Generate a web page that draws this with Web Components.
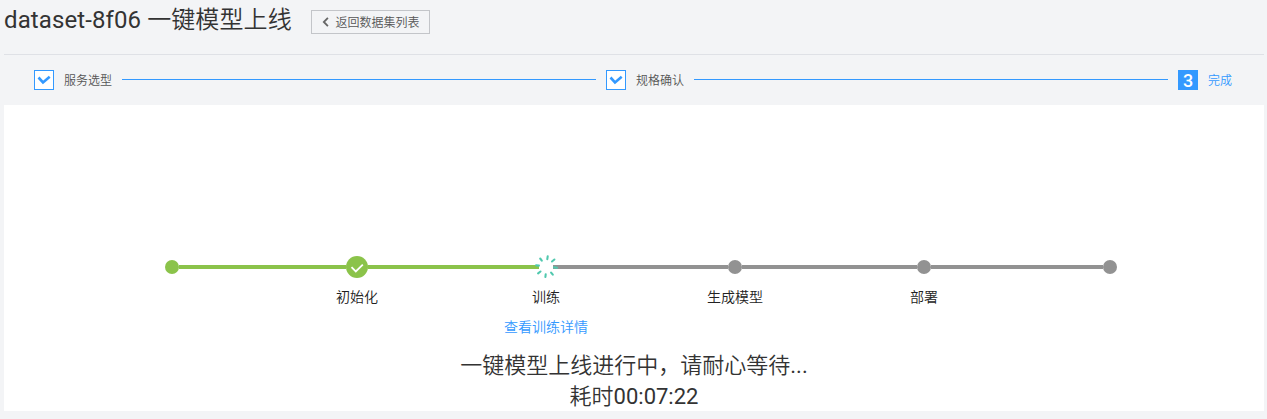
<!DOCTYPE html>
<html lang="zh-CN">
<head>
<meta charset="utf-8">
<title>一键模型上线</title>
<style>
body{margin:0;height:419px;overflow:hidden;background:#f3f4f6;color:#333;font-family:Roboto,"Noto Sans CJK SC",sans-serif}
</style>
</head>
<body>
<deploy-page></deploy-page>
<script>
const define = (name, html) => customElements.define(name, class extends HTMLElement {
  constructor() {
    super();
    const t = document.createElement('template');
    t.innerHTML = html;
    this.attachShadow({mode: 'open'}).append(t.content.cloneNode(true));
  }
});

define('back-button', `<style>
:host{display:flex;box-sizing:border-box;width:119px;height:24px;border:1px solid #c3c5c9;align-items:center;padding-left:10px;font-size:12px;font-weight:350;line-height:20px;color:#555;white-space:nowrap}
svg{width:7px;height:10px;margin-right:6.5px;flex:none}
.t{padding-top:2px}
</style><svg viewBox="0 0 7 10"><path d="M5.9 .8 1.8 5l4.1 4.2" fill="none" stroke="#666" stroke-width="1.8"/></svg><span class="t"><slot></slot></span>`);

define('page-header', `<style>
:host{display:flex;height:54px;border-bottom:1px solid #dfe1e6;align-items:flex-start}
h1{margin:0;font-size:24px;line-height:40px;font-weight:400;letter-spacing:.1px;white-space:nowrap;width:307px}
::slotted(span){font-weight:350}
back-button{margin-top:10px}
</style><h1><slot></slot></h1><back-button>返回数据集列表</back-button>`);

define('wizard-step', `<style>
:host{display:flex;align-items:center;font-size:12px;line-height:20px;color:#555;white-space:nowrap}
.b{box-sizing:border-box;width:20px;height:20px;border:1px solid #39f;background:#fff;margin-right:10px;display:flex;align-items:center;justify-content:center}
svg{width:14px;height:10px}
.n{display:none;font-size:18px;font-weight:500;line-height:20px;color:#fff;padding-top:1px}
.t{font-weight:350;padding-top:2px}
:host([current]){color:#39f}
:host([current]) .b{background:#39f}
:host([current]) svg{display:none}
:host([current]) .n{display:block}
</style><span class="b"><svg viewBox="0 0 14 10"><path d="M1.5 2.5 6 7.4 12.7 1.7" fill="none" stroke="#39f" stroke-width="2.6"/></svg><span class="n"><slot name="n"></slot></span></span><span class="t"><slot></slot></span>`);

define('wizard-bar', `<style>
:host{display:flex;height:50px;padding:0 32px 0 30px;box-sizing:border-box;align-items:center}
wizard-step{height:20px}
i{height:1px;background:#39f;flex:1;margin:0 10px 1px}
</style><wizard-step>服务选型</wizard-step><i></i><wizard-step>规格确认</wizard-step><i></i><wizard-step current><span slot="n">3</span>完成</wizard-step>`);

define('stage-node', `<style>
:host{display:flex;flex-direction:column;width:189px;align-items:center;font-weight:350;--a:#929292;--b:#929292}
.r{display:flex;align-items:center;height:24px;width:100%}
.r i{flex:1;height:4px;background:var(--a)}
.r i:last-child{background:var(--b)}
.m{width:14px;height:14px;border-radius:50%;background:#929292;flex:none}
svg{display:none;flex:none;overflow:visible;z-index:1}
:host([done]),:host([busy]){--a:#8bc34a}
:host([done]){--b:#8bc34a}
:host([done]) .m,:host([busy]) .m{display:none}
:host([done]) .ok{display:block;width:22px;height:22px}
:host([busy]) .sp{display:block;width:14px;height:14px}
.t{font-size:14px;line-height:30px;margin-top:3px;color:#222}
::slotted(a){display:block;font-size:14px;line-height:30px;color:#39f}
</style><div class="r"><i></i><span class="m"></span>
<svg class="ok" viewBox="0 0 22 22"><circle cx="11" cy="11" r="11" fill="#8bc34a"/><path d="m5.5 11.2 4.3 4.3 7-6.9" fill="none" stroke="#fff" stroke-width="1.8"/></svg>
<svg class="sp" viewBox="-7 -7 14 14"><g stroke="#50c8ae" stroke-width="2.1" stroke-linecap="round"><path d="M1.7-10.6 1.3-7.9M8.4-7.5 6-5.5M10.9.8 8 .4M6.8 7.7 5.1 5.6M-.6 10-.3 7.3M-7.9 6.3-5.5 4.5M-9.9-1.8-7.1-1.4M-5.8-8.5-4.2-6.4"/></g></svg><i></i></div>
<div class="t"><slot></slot></div><slot name="link"></slot>`);

define('rail-end', `<style>
:host{display:flex;align-items:center;height:24px;width:97.5px;--c:#8bc34a}
:host([last]){flex-direction:row-reverse;width:98.5px;--c:#929292}
b{width:14px;height:14px;border-radius:50%;background:var(--c)}
i{flex:1;height:4px;background:var(--c)}
</style><b></b><i></i>`);

define('progress-rail', `<style>
:host{display:flex;padding-left:161px;height:89px}
</style><rail-end></rail-end><stage-node done>初始化</stage-node><stage-node busy>训练<a slot="link">查看训练详情</a></stage-node><stage-node>生成模型</stage-node><stage-node>部署</stage-node><rail-end last></rail-end>`);

define('status-message', `<style>
:host{display:block;text-align:center;font-size:22px;line-height:31px;margin-top:6px}
</style><slot></slot>`);

define('deploy-page', `<style>
:host{display:block;width:1260px;margin-left:4px}
main{box-sizing:border-box;height:306px;background:#fff;padding-top:150px}
.c{font-weight:350}
</style><page-header>dataset-8f06 <span>一键模型上线</span></page-header><wizard-bar></wizard-bar><main><progress-rail></progress-rail><status-message><div><span class="c">一键模型上线进行中，请耐心等待</span>...</div><div><span class="c">耗时</span>00:07:22</div></status-message></main>`);
</script>
</body>
</html>
